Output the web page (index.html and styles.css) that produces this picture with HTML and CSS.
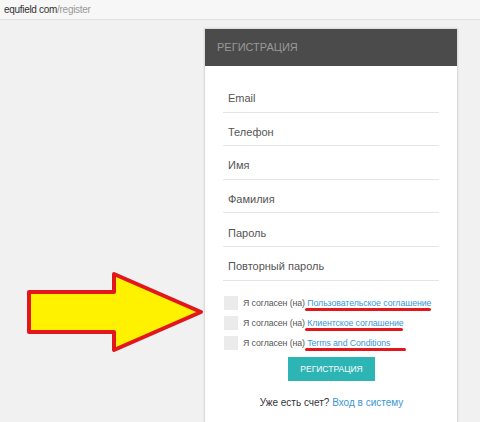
FILE: index.html
```html
<!DOCTYPE html>
<html>
<head>
<meta name="viewport" content="width=device-width, initial-scale=1">
<link rel="stylesheet" href="styles.css">
</head>
<body>

<div class="urlbar">
  <span class="host">equfield com</span><span class="path">/register</span>
</div>

<div class="page">
  <!-- annotation arrow -->
  <svg class="arrow" width="200" height="84" viewBox="0 0 200 84">
    <polygon points="4,20 89,20 89,2 176,40 89,78 89,60 4,60" fill="#fff200" stroke="#e3161c" stroke-width="4" stroke-linejoin="round"/>
  </svg>

  <div class="card">
    <div class="card-head">РЕГИСТРАЦИЯ</div>
    <form class="card-body" action="">
      <input type="text" class="field" placeholder="Email">
      <input type="text" class="field" placeholder="Телефон">
      <input type="text" class="field" placeholder="Имя">
      <input type="text" class="field" placeholder="Фамилия">
      <input type="password" class="field" placeholder="Пароль">
      <input type="password" class="field" placeholder="Повторный пароль">

      <div class="agree">
        <div class="check-row">
          <span class="box"></span>
          <span>Я согласен (на) <a href="#" class="mark mark-1">Пользовательское соглашение</a></span>
        </div>
        <div class="check-row">
          <span class="box"></span>
          <span>Я согласен (на) <a href="#" class="mark mark-2">Клиентское соглашение</a></span>
        </div>
        <div class="check-row">
          <span class="box"></span>
          <span>Я согласен (на) <a href="#" class="mark mark-3">Terms and Conditions</a></span>
        </div>
      </div>

      <div class="actions">
        <button type="button" class="btn">РЕГИСТРАЦИЯ</button>
      </div>
      <p class="login">Уже есть счет? <a href="#">Вход в систему</a></p>
    </form>
  </div>
</div>

</body>
</html>
```

FILE: styles.css
```css
* {
  box-sizing: border-box;
}

body {
  margin: 0;
  background-color: #f1f1f1;
  font-family: "Liberation Sans", Arial, sans-serif;
  color: #444;
  overflow: hidden;
}

.urlbar {
  height: 20px;
  padding: 4px 4px 0;
  background-color: #f7f7f7;
  border-bottom: 1px solid #e2e2e2;
  font-size: 10px;
  letter-spacing: -0.3px;
}

.host {
  color: #333;
}

.path {
  color: #999;
}

.page {
  position: relative;
  padding: 8px 0 0 204px;
}

.arrow {
  position: absolute;
  left: 25px;
  top: 252px;
}

.card {
  width: 254px;
  height: 420px;
  background-color: #fff;
  border: 1px solid #dcdcdc;
  box-shadow: 0 0 2px rgba(0, 0, 0, 0.1);
}

.card-head {
  height: 37px;
  padding: 12px 12px 0;
  background-color: #4b4b4b;
  color: #999;
  font-size: 11px;
}

.card-body {
  padding: 13px 17px 0 18px;
}

.field {
  display: block;
  width: 216px;
  height: 33.6px;
  padding: 6px 0 0 5px;
  border: none;
  border-bottom: 1px solid #e5e5e5;
  font-family: inherit;
  font-size: 11px;
  color: #444;
  outline: none;
}

.field::placeholder {
  color: #555;
}

.agree {
  padding: 12px 0 0 1px;
}

.check-row {
  display: flex;
  align-items: center;
  gap: 5px;
  height: 20px;
  white-space: nowrap;
  font-size: 8.8px;
  letter-spacing: -0.1px;
  color: #555;
}

.box {
  width: 14px;
  height: 14px;
  background-color: #ebebeb;
}

.check-row a,
.login a {
  color: #3b97d3;
  text-decoration: none;
}

.mark {
  position: relative;
}

/* red annotation strokes under the links */
.mark::after {
  content: "";
  position: absolute;
  left: -2px;
  top: 10px;
  height: 3px;
  border-radius: 2px;
  background-color: #e3161c;
}

.mark-1::after {
  width: 126px;
}

.mark-2::after {
  width: 98px;
}

.mark-3::after {
  width: 101px;
}

.actions {
  display: flex;
  justify-content: center;
  padding-top: 4px;
}

.btn {
  width: 87px;
  height: 24px;
  border: none;
  background-color: #2db4b4;
  color: #fff;
  font-family: inherit;
  font-size: 8.5px;
  cursor: pointer;
}

.login {
  margin: 16px 0 0;
  text-align: center;
  font-size: 10px;
  color: #333;
}
```
